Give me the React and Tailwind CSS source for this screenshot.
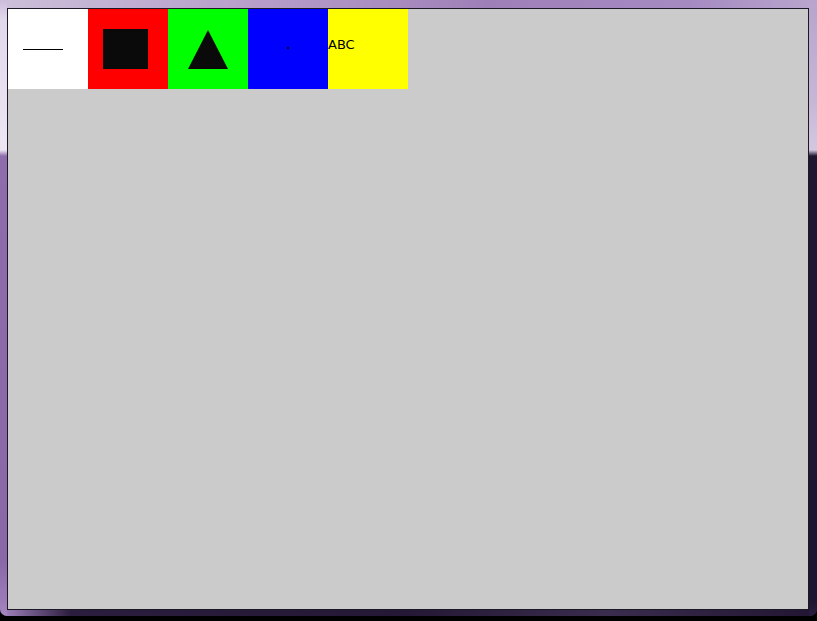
import React from "react";

const Cell = ({ color, children }) => (
  <div className={`w-[80px] h-[80px] shrink-0 ${color}`}>{children}</div>
);

const App = () => {
  return (
    <div className="w-[817px] h-[621px] bg-black overflow-hidden">
      <div className="flex w-full h-[616px] rounded-b-[7px] overflow-hidden bg-[#2a1d3c]">
        {/* left frame */}
        <div className="w-[7px] h-full bg-[linear-gradient(to_bottom,#cdbcdc_0px,#e2d8ec_20px,#ede6f2_150px,#8f6dac_156px,#8a68a8_560px,#9b7bb7_600px,#a588c0_616px)]" />

        <div className="flex flex-col w-[802px]">
          {/* top frame */}
          <div className="h-[8px] bg-[linear-gradient(to_right,#cbbfd9,#b79fca_30%,#9f7fb8_60%,#a58ac2_85%,#b8a4cc)]" />

          {/* client area */}
          <div className="w-[802px] h-[602px] border border-[#1c1826] bg-[#cbcbcb]">
            <div className="flex">
              <Cell color="bg-white">
                <div className="pt-[40px] pl-[15px]">
                  <div className="w-[40px] h-px bg-black" />
                </div>
              </Cell>
              <Cell color="bg-[#ff0000]">
                <div className="pt-[20px] pl-[15px]">
                  <div className="w-[45px] h-[40px] bg-[#0a0a0a]" />
                </div>
              </Cell>
              <Cell color="bg-[#00ff00]">
                <div className="pt-[21px] pl-[20px]">
                  <svg width="40" height="39" viewBox="0 0 40 39">
                    <polygon points="20,0 40,39 0,39" fill="#0a0a0a" />
                  </svg>
                </div>
              </Cell>
              <Cell color="bg-[#0000ff]">
                <div className="pt-[38px] pl-[39px]">
                  <div className="w-[2px] h-[2px] bg-black" />
                </div>
              </Cell>
              <Cell color="bg-[#ffff00]">
                <div className="pt-[29px] text-[13px] leading-none text-black font-['DejaVu_Sans',sans-serif]">
                  ABC
                </div>
              </Cell>
            </div>
          </div>

          {/* bottom frame */}
          <div className="flex-1 bg-[linear-gradient(to_right,#9a7cb6,#2b1d3d_8%,#241836_50%,#3a2c4c_75%,#221634)]" />
        </div>

        {/* right frame */}
        <div className="w-[8px] h-full bg-[linear-gradient(to_bottom,#b8a4cc_0px,#c6b6d6_100px,#d4c8e0_150px,#1f1631_156px,#1e1530_600px,#2a1d3c_616px)]" />
      </div>
    </div>
  );
};

export default App;
